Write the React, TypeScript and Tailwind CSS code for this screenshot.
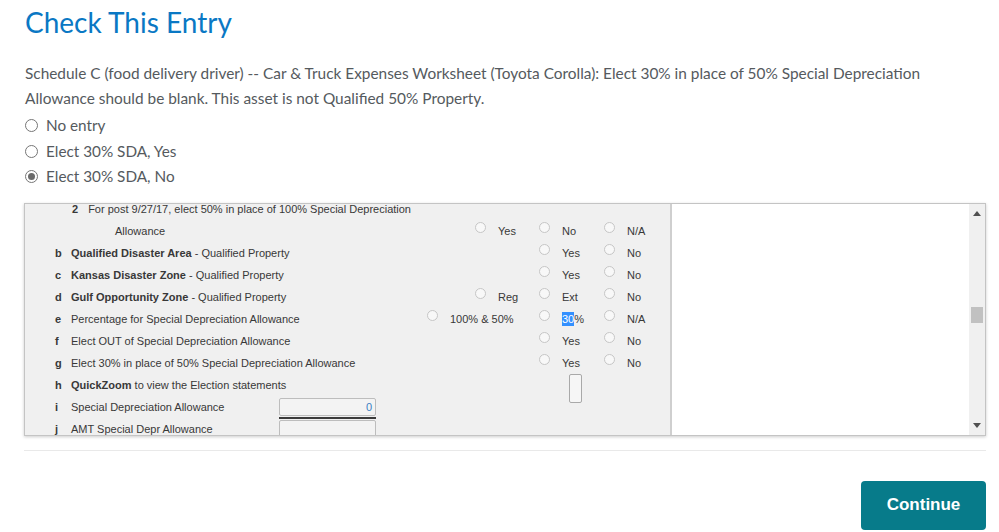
import React from "react"

const circle = "inline-block w-[11px] h-[11px] rounded-full border border-[#c6c6c6] bg-[#f8f8f8] shrink-0 mb-[8px]"

function Opt({ label, col }: { label: React.ReactNode; col: string }) {
  return (
    <div className={`${col} flex items-center whitespace-nowrap`}>
      <span className={circle} />
      <span className="ml-[12px]">{label}</span>
    </div>
  )
}

type Row = {
  letter?: string
  label: React.ReactNode
  span?: string
  extra?: React.ReactNode
}

const rows: Row[] = [
  {
    label: (
      <span className="whitespace-nowrap">
        <b className="ml-[1px] mr-[10px]">2</b>For post 9/27/17, elect 50% in place of 100% Special Depreciation
      </span>
    ),
    span: "col-span-6",
  },
  {
    label: <span className="pl-[44px]">Allowance</span>,
    span: "col-span-2",
    extra: (
      <>
        <Opt col="col-start-6" label="Yes" />
        <Opt col="col-start-7" label="No" />
        <Opt col="col-start-8" label="N/A" />
      </>
    ),
  },
  {
    letter: "b",
    label: <><b>Qualified Disaster Area</b> - Qualified Property</>,
    span: "col-span-2",
    extra: (
      <>
        <Opt col="col-start-7" label="Yes" />
        <Opt col="col-start-8" label="No" />
      </>
    ),
  },
  {
    letter: "c",
    label: <><b>Kansas Disaster Zone</b> - Qualified Property</>,
    span: "col-span-2",
    extra: (
      <>
        <Opt col="col-start-7" label="Yes" />
        <Opt col="col-start-8" label="No" />
      </>
    ),
  },
  {
    letter: "d",
    label: <><b>Gulf Opportunity Zone</b> - Qualified Property</>,
    span: "col-span-2",
    extra: (
      <>
        <Opt col="col-start-6" label="Reg" />
        <Opt col="col-start-7" label="Ext" />
        <Opt col="col-start-8" label="No" />
      </>
    ),
  },
  {
    letter: "e",
    label: "Percentage for Special Depreciation Allowance",
    span: "col-span-2",
    extra: (
      <>
        <Opt col="col-start-5 col-span-2" label="100% & 50%" />
        <Opt
          col="col-start-7"
          label={<><span className="bg-[#3390ff] text-white py-[1px]">30</span>%</>}
        />
        <Opt col="col-start-8" label="N/A" />
      </>
    ),
  },
  {
    letter: "f",
    label: "Elect OUT of Special Depreciation Allowance",
    span: "col-span-2",
    extra: (
      <>
        <Opt col="col-start-7" label="Yes" />
        <Opt col="col-start-8" label="No" />
      </>
    ),
  },
  {
    letter: "g",
    label: "Elect 30% in place of 50% Special Depreciation Allowance",
    span: "col-span-3",
    extra: (
      <>
        <Opt col="col-start-7" label="Yes" />
        <Opt col="col-start-8" label="No" />
      </>
    ),
  },
  {
    letter: "h",
    label: <><b>QuickZoom</b> to view the Election statements</>,
    span: "col-span-2",
    extra: (
      <div className="col-start-7 self-start h-[22px]">
        <div className="ml-[30px] mt-[-1px] w-[13px] h-[29px] rounded-[2px] border border-[#a9a9a9] bg-[#f6f6f6]" />
      </div>
    ),
  },
  {
    letter: "i",
    label: "Special Depreciation Allowance",
    extra: (
      <div className="col-start-4 self-start h-[22px]">
        <div className="w-[97px] mt-[1px]">
          <div className="h-[18px] border border-[#bdbdbd] rounded-[2px] bg-[#f3f3f3] text-right pr-[3px] leading-[16px] text-[#3b7fc4]">0</div>
          <div className="h-[2px] mt-[1px] bg-[#3a3a3a]" />
        </div>
      </div>
    ),
  },
  {
    letter: "j",
    label: "AMT Special Depr Allowance",
    extra: (
      <div className="col-start-4 self-start h-[22px]">
        <div className="w-[97px] mt-[1px] h-[22px] border border-[#bdbdbd] rounded-[2px] bg-[#f3f3f3]" />
      </div>
    ),
  },
]

function FormPane() {
  return (
    <div className="w-[645px] h-full overflow-hidden bg-[#f0f0f0] text-[11px] text-[#383838] font-['Liberation_Sans',Arial,sans-serif]">
      <div className="-mt-[5px]">
        {rows.map((r, i) => (
          <div
            key={i}
            className="grid grid-cols-[30px_16px_208px_148px_48px_64px_65px_1fr] h-[22px] items-center"
          >
            <span className="col-start-2 font-bold">{r.letter}</span>
            <div className={`col-start-3 ${r.span ?? ""} whitespace-nowrap`}>{r.label}</div>
            {r.extra}
          </div>
        ))}
      </div>
    </div>
  )
}

function Scrollbar() {
  return (
    <div className="w-[16px] h-full bg-[#f0f0f0] flex flex-col items-center">
      <svg width="8" height="5" viewBox="0 0 8 5" className="mt-[7px]">
        <path d="M0 5 L4 0 L8 5 Z" fill="#505050" />
      </svg>
      <div className="mt-[91px] w-[12px] h-[16px] bg-[#c1c1c1]" />
      <div className="flex-1" />
      <svg width="8" height="5" viewBox="0 0 8 5" className="mb-[7px]">
        <path d="M0 0 L8 0 L4 5 Z" fill="#505050" />
      </svg>
    </div>
  )
}

const choices = ["No entry", "Elect 30% SDA, Yes", "Elect 30% SDA, No"]

export default function App() {
  return (
    <div className="w-[999px] h-[532px] bg-white overflow-hidden pl-[24px] pr-[13px] font-['Lato','Noto_Sans',sans-serif] text-[#555a5e]">
      <h1 className="text-[28px] leading-[34px] pt-[5px] pl-[1px] text-[#0a78c4] font-normal">Check This Entry</h1>

      <p className="mt-[22px] pl-[1px] text-[15.4px] leading-[25px]">
        Schedule C (food delivery driver) -- Car &amp; Truck Expenses Worksheet (Toyota Corolla): Elect 30% in place of 50% Special Depreciation Allowance should be blank. This asset is not Qualified 50% Property.
      </p>

      <div className="mt-[2px] flex flex-col">
        {choices.map((c, i) => (
          <label key={c} className="flex items-center h-[25.5px] text-[15.3px]">
            <span className="w-[13px] h-[13px] ml-[1px] rounded-full border border-[#767676] bg-white flex items-center justify-center">
              {i === 2 && <span className="w-[7px] h-[7px] rounded-full bg-[#6b6b6b]" />}
            </span>
            <span className="ml-[8px]">{c}</span>
          </label>
        ))}
      </div>

      <div className="mt-[13px] h-[233px] flex border border-[#c4c4c4] shadow-[0_1px_3px_rgba(0,0,0,0.2)]">
        <FormPane />
        <div className="w-[2px] bg-[#cfcfcf]" />
        <div className="flex-1 bg-white" />
        <Scrollbar />
      </div>

      <div className="mt-[14px] h-px bg-[#e9e9e9]" />

      <div className="flex justify-end mt-[30px]">
        <button className="w-[125px] h-[49px] rounded-[4px] bg-[#077b8a] text-white text-[17px] font-bold font-['Liberation_Sans',Arial,sans-serif]">
          Continue
        </button>
      </div>
    </div>
  )
}
